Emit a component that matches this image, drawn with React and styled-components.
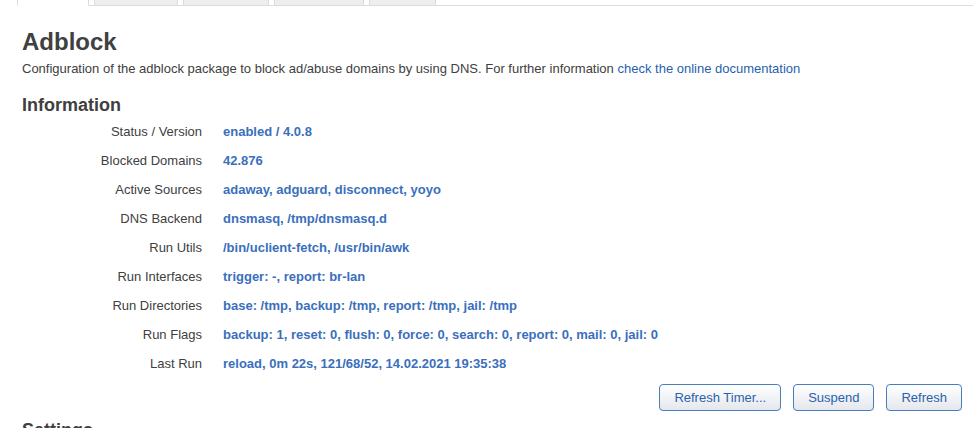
import React from "react";
import styled, { createGlobalStyle } from "styled-components";

const GlobalStyle = createGlobalStyle`
  html, body {
    margin: 0;
    padding: 0;
    background: #fff;
    font-family: "Liberation Sans", Arial, sans-serif;
    color: #404040;
  }
`;

const Page = styled.div`
  padding: 0 7px 0 17px;
  overflow: hidden;
  height: 428px;
`;

const TabMenu = styled.ul`
  display: flex;
  list-style: none;
  margin: -25px 0 0 0;
  padding: 0;
  height: 30px;
  border-bottom: 1px solid #ddd;
`;

const Tab = styled.li`
  width: ${(p) => p.$w}px;
  margin-right: 5px;
  box-sizing: border-box;
  border: 1px solid #ddd;
  border-bottom: ${(p) => (p.$active ? "1px solid #fff" : "1px solid #ddd")};
  margin-bottom: -1px;
  background: ${(p) => (p.$active ? "#fff" : "#eee")};
  border-radius: 4px 4px 0 0;
  font-size: 13px;
  line-height: 18px;
  text-align: center;
  color: #404040;
  overflow: hidden;
  padding-top: 2px;
`;

const Content = styled.div`
  padding: 0 11px 0 5px;
`;

const Title = styled.h2`
  margin: 22px 0 0 0;
  font-size: 24px;
  line-height: 28px;
  font-weight: bold;
  color: #404040;
`;

const Description = styled.p`
  margin: 4px 0 0 0;
  font-size: 13px;
  line-height: 18px;
`;

const Link = styled.a`
  color: #1f5fb0;
  text-decoration: none;
`;

const SectionTitle = styled.h3`
  margin: ${(p) => p.$top}px 0 0 0;
  font-size: 18px;
  line-height: 22px;
  font-weight: bold;
  color: #404040;
`;

const InfoList = styled.div`
  margin-top: 1px;
  display: flex;
  flex-direction: column;
`;

const InfoRow = styled.div`
  display: grid;
  grid-template-columns: 180px 1fr;
  column-gap: 21px;
  height: 29px;
  line-height: 29px;
  font-size: 13px;
`;

const Label = styled.div`
  text-align: right;
  color: #404040;
  white-space: nowrap;
`;

const Value = styled.div`
  font-weight: bold;
  color: #3a6fbd;
  white-space: nowrap;
`;

const Actions = styled.div`
  margin-top: 6px;
  display: flex;
  justify-content: flex-end;
  gap: 12px;
`;

const Button = styled.button`
  height: 27px;
  padding: 0 14px;
  border: 1px solid #4a7cc0;
  border-radius: 4px;
  background: linear-gradient(#ffffff, #e4e7ec);
  color: #2b62ad;
  font-family: "Liberation Sans", Arial, sans-serif;
  font-size: 13px;
  line-height: 25px;
  cursor: pointer;
`;

const tabs = [
  { name: "Overview", w: 72, active: true },
  { name: "Blacklist", w: 84 },
  { name: "Whitelist", w: 86 },
  { name: "DNS Query", w: 90 },
  { name: "Log View", w: 67 },
];

const info = [
  ["Status / Version", "enabled / 4.0.8"],
  ["Blocked Domains", "42.876"],
  ["Active Sources", "adaway, adguard, disconnect, yoyo"],
  ["DNS Backend", "dnsmasq, /tmp/dnsmasq.d"],
  ["Run Utils", "/bin/uclient-fetch, /usr/bin/awk"],
  ["Run Interfaces", "trigger: -, report: br-lan"],
  ["Run Directories", "base: /tmp, backup: /tmp, report: /tmp, jail: /tmp"],
  ["Run Flags", "backup: 1, reset: 0, flush: 0, force: 0, search: 0, report: 0, mail: 0, jail: 0"],
  ["Last Run", "reload, 0m 22s, 121/68/52, 14.02.2021 19:35:38"],
];

export default function App() {
  return (
    <Page>
      <GlobalStyle />
      <TabMenu>
        {tabs.map((t) => (
          <Tab key={t.name} $w={t.w} $active={t.active}>
            {t.name}
          </Tab>
        ))}
      </TabMenu>
      <Content>
        <Title>Adblock</Title>
        <Description>
          Configuration of the adblock package to block ad/abuse domains by using DNS. For further information{" "}
          <Link href="#">check the online documentation</Link>
        </Description>
        <SectionTitle $top={16}>Information</SectionTitle>
        <InfoList>
          {info.map(([label, value]) => (
            <InfoRow key={label}>
              <Label>{label}</Label>
              <Value>{value}</Value>
            </InfoRow>
          ))}
        </InfoList>
        <Actions>
          <Button>Refresh Timer...</Button>
          <Button>Suspend</Button>
          <Button>Refresh</Button>
        </Actions>
        <SectionTitle $top={8}>Settings</SectionTitle>
      </Content>
    </Page>
  );
}
